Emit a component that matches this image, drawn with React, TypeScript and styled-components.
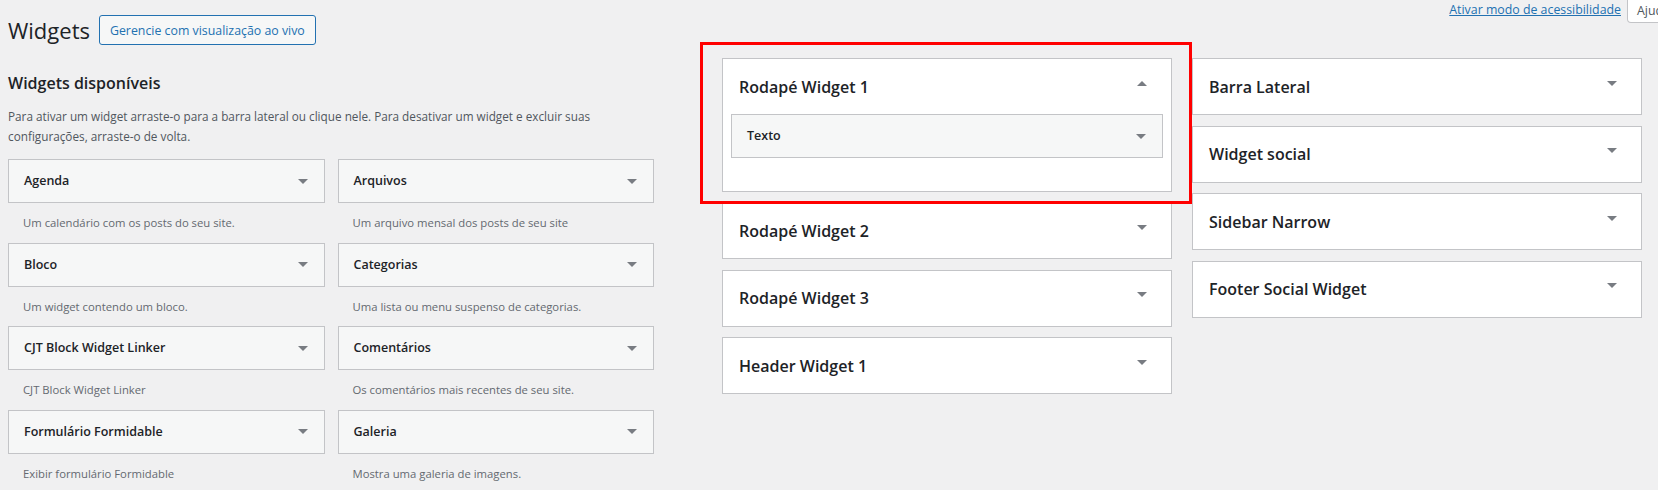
import React from "react";
import styled, { createGlobalStyle } from "styled-components";

const GlobalStyle = createGlobalStyle`
  html, body { margin: 0; padding: 0; }
  body {
    background: #f0f0f1;
    font-family: "Open Sans", "Noto Sans", sans-serif;
    color: #1d2327;
    overflow: hidden;
    width: 1658px;
    height: 490px;
  }
  * { box-sizing: border-box; }
`;

const Page = styled.div`
  position: relative;
  width: 1658px;
  height: 490px;
  overflow: hidden;
  padding-left: 8px;
`;

const Header = styled.header`
  display: flex;
  justify-content: space-between;
  align-items: flex-start;
  height: 58px;
`;

const TitleRow = styled.div`
  display: flex;
  align-items: center;
  margin-top: 15px;
  height: 30px;
`;

const PageTitle = styled.h1`
  margin: 0 9px 0 0;
  font-size: 22px;
  font-weight: 400;
  line-height: 30px;
  color: #1d2327;
`;

const LiveButton = styled.a`
  display: inline-flex;
  align-items: center;
  height: 30px;
  padding: 0 10px;
  border: 1px solid #2271b1;
  border-radius: 3px;
  background: #f6f7f7;
  color: #2271b1;
  font-size: 12.35px;
  text-decoration: none;
  white-space: nowrap;
`;

const MetaLinks = styled.div`
  display: flex;
  align-items: flex-start;
  gap: 6px;
  margin-right: -49px;
`;

const AccessLink = styled.a`
  margin-top: 1px;
  font-size: 12.35px;
  line-height: 18px;
  color: #2271b1;
  text-decoration: underline;
  white-space: nowrap;
`;

const HelpTab = styled.button`
  width: 80px;
  height: 24px;
  margin-top: -1px;
  padding: 0 16px 0 9px;
  border: 1px solid #c3c4c7;
  border-top: none;
  border-radius: 0 0 4px 4px;
  background: #fff;
  color: #50575e;
  font-family: inherit;
  font-size: 12.35px;
  line-height: 22px;
  text-align: left;
`;

const Main = styled.main`
  display: flex;
  align-items: flex-start;
`;

const AvailableCol = styled.section`
  width: 646px;
  margin-right: 68px;
  flex: none;
`;

const SectionTitle = styled.h2`
  margin: 13px 0 0;
  font-size: 16px;
  font-weight: 600;
  line-height: 24px;
  color: #1d2327;
`;

const SectionDescription = styled.p`
  margin: 11px 0 0;
  font-size: 11.75px;
  line-height: 20px;
  color: #50575e;
`;

const WidgetGrid = styled.div`
  display: grid;
  grid-template-columns: 1fr 1fr;
  column-gap: 13px;
  margin-top: 13px;
`;

const WidgetItem = styled.div`
  display: flex;
  flex-direction: column;
`;

const WidgetTop = styled.div`
  display: flex;
  align-items: center;
  justify-content: space-between;
  height: 44px;
  padding: 0 16px 0 15px;
  border: 1px solid #c3c4c7;
  background: #f6f7f7;
`;

const WidgetTitle = styled.h3`
  margin: 0;
  font-size: 12.5px;
  font-weight: 600;
  line-height: 16px;
  color: #1d2327;
`;

const WidgetDescription = styled.div`
  display: flex;
  align-items: center;
  height: 39.5px;
  padding: 0 15px;
  font-size: 11.3px;
  color: #646970;
`;

const SidebarCol = styled.div<{ $offset?: number }>`
  position: relative;
  display: flex;
  flex-direction: column;
  gap: 10.5px;
  width: 450px;
  flex: none;
  margin-left: ${(p) => p.$offset ?? 0}px;
`;

const SidebarBox = styled.div`
  background: #fff;
  border: 1px solid #c3c4c7;
`;

const SidebarHead = styled.div`
  display: flex;
  justify-content: space-between;
  align-items: center;
  height: 55px;
  padding: 0 24px 0 16px;
`;

const SidebarTitle = styled.h2`
  margin: 0;
  font-size: 16px;
  font-weight: 600;
  line-height: 24px;
  color: #1d2327;
`;

const HeadCaret = styled.span`
  align-self: flex-start;
  margin-top: 21.5px;
  display: flex;
`;

const SidebarBody = styled.div`
  padding: 0 8px 32.5px;
`;

const Annotation = styled.div`
  position: absolute;
  left: -22px;
  top: -16px;
  width: 492px;
  height: 162px;
  border: 3px solid #ff0000;
  pointer-events: none;
  z-index: 2;
`;

const CaretSvg = styled.svg`
  display: block;
  fill: #787c82;
`;

const Caret = ({ up = false }: { up?: boolean }) => (
  <CaretSvg width="10" height="5" viewBox="0 0 10 5" aria-hidden="true">
    <path d={up ? "M0 5 L5 0 L10 5 Z" : "M0 0 L10 0 L5 5 Z"} />
  </CaretSvg>
);

const widgets: [string, string][] = [
  ["Agenda", "Um calendário com os posts do seu site."],
  ["Arquivos", "Um arquivo mensal dos posts de seu site"],
  ["Bloco", "Um widget contendo um bloco."],
  ["Categorias", "Uma lista ou menu suspenso de categorias."],
  ["CJT Block Widget Linker", "CJT Block Widget Linker"],
  ["Comentários", "Os comentários mais recentes de seu site."],
  ["Formulário Formidable", "Exibir formulário Formidable"],
  ["Galeria", "Mostra uma galeria de imagens."],
];

const middleSidebars = ["Rodapé Widget 2", "Rodapé Widget 3", "Header Widget 1"];
const rightSidebars = ["Barra Lateral", "Widget social", "Sidebar Narrow", "Footer Social Widget"];

const CollapsedSidebar = ({ name }: { name: string }) => (
  <SidebarBox>
    <SidebarHead>
      <SidebarTitle>{name}</SidebarTitle>
      <HeadCaret>
        <Caret />
      </HeadCaret>
    </SidebarHead>
  </SidebarBox>
);

export default function App() {
  return (
    <>
      <GlobalStyle />
      <Page>
        <Header>
          <TitleRow>
            <PageTitle>Widgets</PageTitle>
            <LiveButton href="#">Gerencie com visualização ao vivo</LiveButton>
          </TitleRow>
          <MetaLinks>
            <AccessLink href="#">Ativar modo de acessibilidade</AccessLink>
            <HelpTab type="button">Ajuda ▾</HelpTab>
          </MetaLinks>
        </Header>
        <Main>
          <AvailableCol>
            <SectionTitle>Widgets disponíveis</SectionTitle>
            <SectionDescription>
              Para ativar um widget arraste-o para a barra lateral ou clique nele. Para desativar um widget e excluir suas
              configurações, arraste-o de volta.
            </SectionDescription>
            <WidgetGrid>
              {widgets.map(([title, desc]) => (
                <WidgetItem key={title}>
                  <WidgetTop>
                    <WidgetTitle>{title}</WidgetTitle>
                    <Caret />
                  </WidgetTop>
                  <WidgetDescription>{desc}</WidgetDescription>
                </WidgetItem>
              ))}
            </WidgetGrid>
          </AvailableCol>
          <SidebarCol>
            <Annotation />
            <SidebarBox>
              <SidebarHead>
                <SidebarTitle>Rodapé Widget 1</SidebarTitle>
                <HeadCaret>
                  <Caret up />
                </HeadCaret>
              </SidebarHead>
              <SidebarBody>
                <WidgetTop>
                  <WidgetTitle>Texto</WidgetTitle>
                  <Caret />
                </WidgetTop>
              </SidebarBody>
            </SidebarBox>
            {middleSidebars.map((n) => (
              <CollapsedSidebar key={n} name={n} />
            ))}
          </SidebarCol>
          <SidebarCol $offset={20}>
            {rightSidebars.map((n) => (
              <CollapsedSidebar key={n} name={n} />
            ))}
          </SidebarCol>
        </Main>
      </Page>
    </>
  );
}
